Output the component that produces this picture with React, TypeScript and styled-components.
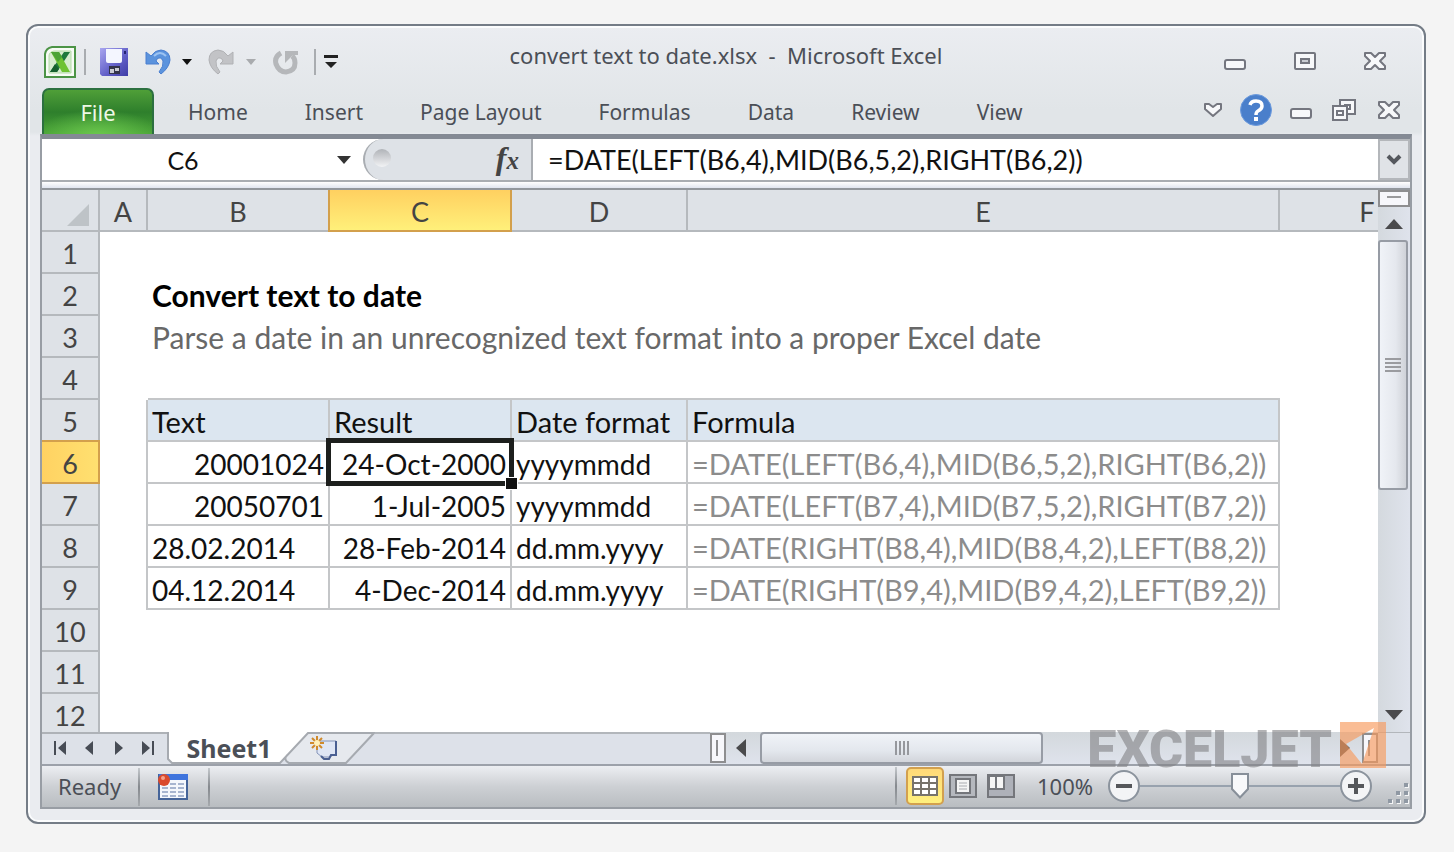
import React from "react";
import styled, { createGlobalStyle, css } from "styled-components";

const ui = `"Noto Sans", "Open Sans", sans-serif`;
const sheet = `Lato, "Noto Sans", sans-serif`;

const GlobalStyle = createGlobalStyle`
  *, *::before, *::after { box-sizing: border-box; }
  body { margin: 0; background: #f4f4f4; font-family: ${ui}; color: #4b4f57; }
  button, input { font: inherit; color: inherit; }
`;

const Page = styled.div`
  display: flex;
  height: 100vh;
  min-height: 480px;
  padding: 24px 28px 28px 26px;
`;

const Window = styled.main`
  position: relative;
  flex: 1;
  min-width: 0;
  display: flex;
  flex-direction: column;
  padding: 0 12px 13px;
  border: 2px solid #747c86;
  border-radius: 12px;
  background: linear-gradient(#ebedf1, #e1e5e8 84px, #e1e5e8 106px, #eaecf0 110px);
  box-shadow: inset 0 0 0 2px #fbfcfd;
`;

const IconButton = styled.button<{ $gap?: number }>`
  display: flex;
  align-items: center;
  justify-content: center;
  flex: none;
  margin: 0 0 0 ${(p) => p.$gap ?? 0}px;
  padding: 0;
  border: 0;
  background: none;
  svg { display: block; }
`;

const TitleBar = styled.header`
  display: grid;
  grid-template-columns: 1fr auto 1fr;
  height: 62px;
`;

const QuickAccess = styled.div`
  display: flex;
  align-items: center;
  padding: 10px 0 0 4px;
`;

const Divider = styled.span<{ $gap?: number }>`
  flex: none;
  width: 2px;
  height: 26px;
  margin-left: ${(p) => p.$gap ?? 0}px;
  background: #a9acb0;
`;

const Title = styled.h1`
  margin: 0;
  font-size: 22px;
  font-weight: 400;
  line-height: 58px;
  white-space: nowrap;
`;

const WindowControls = styled.div`
  display: flex;
  justify-content: flex-end;
  align-items: center;
  gap: 46px;
  padding: 8px 25px 0 0;
`;

const Ribbon = styled.nav`
  display: flex;
  gap: 1px;
  height: 46px;
  padding-left: 2px;
`;

const FileTab = styled.button`
  width: 112px;
  margin-right: 5px;
  padding: 0;
  border: 2px solid #2c7040;
  border-bottom: 0;
  border-radius: 7px 7px 0 0;
  background: radial-gradient(ellipse 60% 60% at 50% 105%, #6cc84e, rgba(76, 170, 60, 0) 100%),
    linear-gradient(#4f9f38, #2e7f2c 50%, #48a236);
  color: #eef8e6;
  font-size: 22px;
`;

const RibbonTab = styled.button`
  padding: 1px 28px 0;
  border: 0;
  background: none;
  font-size: 21px;
  white-space: nowrap;
`;

const RibbonTools = styled.div`
  display: flex;
  align-items: center;
  margin-left: auto;
  padding: 0 11px 2px 0;
`;

const Workbook = styled.section`
  flex: 1;
  min-height: 0;
  display: flex;
  flex-direction: column;
  border: 2px solid #989da4;
  border-top: 5px solid #848a94;
  background: #fff;
`;

const FormulaBar = styled.div`
  display: flex;
  flex: none;
  height: 43px;
  border-bottom: 2px solid #a9adb2;
  font-size: 25px;
  color: #111;
`;

const NameBox = styled.input`
  width: 282px;
  padding: 0;
  border: 0;
  background: #fff;
  font-family: ${sheet};
  text-align: center;
`;

const FunctionArea = styled.div`
  display: flex;
  align-items: center;
  justify-content: space-between;
  width: 170px;
  margin-left: 11px;
  padding: 0 12px 0 8px;
  border: 2px solid #a9adb2;
  border-width: 0 2px 0 2px;
  border-radius: 22px 0 0 22px;
  background: #dee2e7;
`;

const Knob = styled.span`
  width: 18px;
  height: 18px;
  margin-bottom: 4px;
  border-radius: 9px;
  background: linear-gradient(#b0b3b8, #f2f3f5);
`;

const FxButton = styled(IconButton)`
  align-items: baseline;
  font: italic 700 32px/36px "Liberation Serif", serif;
  color: #444;
  small { font-size: 25px; }
`;

const FormulaInput = styled.input`
  flex: 1;
  min-width: 0;
  padding: 0 0 0 15px;
  border: 0;
  background: #fff;
  font-family: ${sheet};
  font-size: 27px;
`;

const ExpandButton = styled(IconButton)`
  width: 32px;
  border: 2px solid #b4b7bb;
  background: #e0e3e7;
`;

const BarGap = styled.div`
  flex: none;
  height: 8px;
  border-bottom: 2px solid #92979d;
  background: linear-gradient(#fff, #e0e5f0);
`;

const SheetArea = styled.div`
  flex: 1;
  min-height: 0;
  display: flex;
`;

const GridView = styled.div`
  flex: 1;
  min-width: 0;
  overflow: hidden;
`;

const Grid = styled.table`
  width: 1414px;
  table-layout: fixed;
  border-collapse: separate;
  border-spacing: 0;
  font: 400 27px/36px ${sheet};
  color: #111;
`;

const Heading = styled.th<{ $on?: boolean; $dir?: "col" | "row" }>`
  position: relative;
  height: 42px;
  padding: 4px 0 0;
  border: 0 solid #b5b9bd;
  border-width: 0 2px 2px 0;
  background: #dee2e7;
  color: #444;
  font-weight: 400;
  ${(p) =>
    p.$on &&
    css`
      border-color: #d3a04c;
      background: ${p.$dir === "row" ? "linear-gradient(90deg, #ffd262, #ffe070)" : "linear-gradient(#ffd060, #fff07a)"};
      box-shadow: ${p.$dir === "row" ? "0 -2px 0 #d3a04c" : "-2px 0 0 #d3a04c"};
    `}
  svg { display: block; margin: 6px 8px 0 auto; }
`;

type CellProps = { $right?: boolean; $bottom?: boolean; $fill?: boolean; $end?: boolean; $muted?: boolean; $size?: number };
const Cell = styled.td<CellProps>`
  position: relative;
  height: 42px;
  padding: 4px 4px 0;
  border: 0 solid #c4c6c8;
  border-right-width: ${(p) => (p.$right ? 2 : 0)}px;
  border-bottom-width: ${(p) => (p.$bottom ? 2 : 0)}px;
  background: ${(p) => (p.$fill ? "#dce6f0" : "transparent")};
  text-align: ${(p) => (p.$end ? "right" : "left")};
  color: ${(p) => (p.$muted ? "#8c8c8c" : "inherit")};
  font-size: ${(p) => p.$size ?? 29}px;
  line-height: 36px;
  white-space: nowrap;
`;

const NoteCell = styled(Cell)<{ $strong?: boolean }>`
  padding: 2px 4px;
  color: ${(p) => (p.$strong ? "#000" : "#686868")};
  font-size: 30px;
  font-weight: ${(p) => (p.$strong ? 700 : 400)};
`;

const Selection = styled.span`
  position: absolute;
  z-index: 2;
  inset: -4px;
  border: 5px solid #1d1f1d;
  &::after {
    content: "";
    position: absolute;
    right: -9px;
    bottom: -9px;
    width: 13px;
    height: 13px;
    border: 1px solid #fff;
    background: #111;
  }
`;

const VScroll = styled.div`
  display: flex;
  flex-direction: column;
  align-items: center;
  flex: none;
  width: 32px;
  background: linear-gradient(90deg, #d4d9de, #dfe3ec);
`;

const VSplit = styled.div`
  width: 32px;
  height: 17px;
  border: 2px solid #8e8e90;
  background: linear-gradient(#9a9a9c, #9a9a9c) 50% 4px / 14px 2px no-repeat, #f7f7fb;
`;

const VThumb = styled.div`
  display: flex;
  align-items: center;
  justify-content: center;
  width: 30px;
  height: 250px;
  margin-right: 2px;
  border: 2px solid #979ca5;
  border-radius: 3px;
  background: linear-gradient(90deg, #f0f3f8, #e5e8ee 60%, #cfd2d8);
`;

const ScrollArrow = styled(IconButton)<{ $h: number }>`
  width: 30px;
  height: ${(p) => p.$h}px;
  &:last-child { margin-top: auto; }
`;

const TabStrip = styled.div`
  display: flex;
  flex: none;
  height: 34px;
  border-bottom: 2px solid #9ca1aa;
  background: linear-gradient(#d3d8dc, #dfe3ec);
`;

const TabNav = styled.div`
  display: flex;
  align-items: center;
  justify-content: space-between;
  width: 125px;
  padding: 0 12px 2px 11px;
  border-top: 2px solid #aeb2b7;
  background: #dde1e8;
`;

const SheetTabs = styled.div`
  position: relative;
  display: flex;
  width: 208px;
`;

const TabShapes = styled.svg`
  position: absolute;
  inset: 0;
`;

const SheetTab = styled.button`
  position: relative;
  width: 124px;
  padding: 0;
  border: 0;
  background: none;
  font-size: 25px;
  line-height: 30px;
  font-weight: 700;
`;

const NewTab = styled(IconButton)`
  position: relative;
  width: 66px;
`;

const TabFill = styled.div`
  flex: 1;
  border-top: 2px solid #b2b6bb;
  background: #dde1e9;
`;

const HScroll = styled.div`
  display: flex;
  align-items: center;
  flex: none;
  width: 668px;
`;

const HSplit = styled.span`
  width: 16px;
  height: 30px;
  border: 2px solid #8e8e90;
  background: linear-gradient(#8e8e90, #8e8e90) 4px 50% / 2px 16px no-repeat, #f7f7fb;
  &:last-child { margin-left: auto; }
`;

const HThumb = styled.div`
  display: flex;
  align-items: center;
  justify-content: center;
  width: 283px;
  height: 32px;
  margin-left: 13px;
  border: 2px solid #979ca5;
  border-radius: 4px;
  background: linear-gradient(#f0f3f8, #e3e7ed 60%, #d2d5db);
`;

const Corner = styled.div`
  flex: none;
  width: 32px;
  border-top: 1px solid #b2b6bb;
  background: #dde1e9;
`;

const StatusBar = styled.footer`
  display: flex;
  align-items: center;
  flex: none;
  height: 41px;
  background: linear-gradient(#eceef2, #cdd0d4 50%, #b9bdc1);
`;

const Ready = styled.span`
  width: 96px;
  padding: 0 0 2px 16px;
  font-size: 22px;
`;

const StatusDivider = styled(Divider)`
  height: 38px;
  background: linear-gradient(#c4c8cc, #85898e 50%, #a5a9ad);
`;

const StatusTools = styled.div`
  display: flex;
  align-items: center;
  align-self: stretch;
  margin-left: auto;
  padding-bottom: 2px;
`;

const ViewButton = styled(IconButton)<{ $on?: boolean }>`
  width: 38px;
  height: 38px;
  ${(p) =>
    p.$on &&
    css`
      border: 2px solid #d2a04f;
      border-radius: 5px;
      background: linear-gradient(#ffd978, #fff07e);
    `}
`;

const ZoomLabel = styled.label`
  width: 71px;
  margin-left: 17px;
  font-size: 22px;
`;

const thumb = encodeURIComponent(
  `<svg xmlns="http://www.w3.org/2000/svg" width="18" height="26"><path d="M1 1H17V16L9 24.500L1 16Z" fill="#f8f9fb" stroke="#878f99" stroke-width="2"/></svg>`
);

const ZoomSlider = styled.input`
  appearance: none;
  width: 200px;
  height: 26px;
  margin: 0;
  background: linear-gradient(#98a2ae, #98a2ae) 0 50% / 100% 2px no-repeat;
  &::-webkit-slider-thumb {
    appearance: none;
    width: 18px;
    height: 26px;
    border: 0;
    background: url("data:image/svg+xml,${thumb}") no-repeat;
  }
`;

const Grip = styled.svg`
  align-self: flex-end;
  margin-left: 16px;
`;

const Watermark = styled.div`
  position: absolute;
  right: 38px;
  bottom: 46px;
  display: flex;
  align-items: flex-end;
  gap: 8px;
  pointer-events: none;
  color: rgba(128, 129, 131, 0.6);
  font: 900 52px/52px Roboto, sans-serif;
  svg { display: block; margin-bottom: 8px; }
`;

const ExcelIcon = () => (
  <svg width="32" height="32" viewBox="0 0 32 32">
    <path d="M8 1H31V31H1V8Q2 2 8 1Z" fill="#f7fbf5" stroke="#4c9446" strokeWidth="2" />
    <path d="M10 5H27V27H5V10Q5 6 10 5Z" fill="#d6ecd0" stroke="#b4dca8" strokeWidth="1" />
    <path d="M20 6H26L13 26H6Z" fill="#1f7a3e" />
    <path d="M7 6H15L26 26H18Z" fill="#6fc233" />
    <path d="M7 6H15L18 11L14 16Z" fill="#4aa336" />
    <path d="M6 26L11 18L15 23L13 26Z" fill="#16602f" />
  </svg>
);

const SaveIcon = () => (
  <svg width="28" height="28" viewBox="0 0 28 28">
    <defs>
      <linearGradient id="disk" x1="0" y1="0" x2="1" y2="1">
        <stop offset="0" stopColor="#a9a6f0" />
        <stop offset=".6" stopColor="#5f5dc6" />
        <stop offset="1" stopColor="#3e3da6" />
      </linearGradient>
    </defs>
    <path d="M0 0H28V28H2L0 26Z" fill="url(#disk)" />
    <path d="M6 1H22V13Q22 15 20 15H8Q6 15 6 13Z" fill="#f4f6ff" />
    <path d="M24 3H26V6H24Z" fill="#232273" />
    <path d="M9 18H20V26H9Z" fill="#33344a" />
    <path d="M10 21H14V25H10ZM15 20H19V23H15Z" fill="#c9cbd4" />
  </svg>
);

const UndoIcon = () => (
  <svg width="26" height="28" viewBox="0 0 26 28">
    <path d="M1 4L6 8Q10 2 16 2Q25 3 25 12Q24 20 16 26L14 24Q19 18 18 13Q16 8 12 11L11 13L14 16H1Z" fill="#5b93dd" stroke="#4a7fd0" strokeWidth="1" />
    <path d="M9 8Q15 2 21 8" fill="none" stroke="#9cc3f2" strokeWidth="2" />
  </svg>
);

const RedoIcon = () => (
  <svg width="26" height="28" viewBox="0 0 26 28">
    <path d="M25 4L20 8Q16 2 10 2Q1 3 1 12Q2 20 10 26L12 24Q7 18 8 13Q10 8 14 11L15 13L12 16H25Z" fill="#c2c3c6" stroke="#b0b1b4" strokeWidth="1" />
  </svg>
);

const RepeatIcon = () => (
  <svg width="26" height="28" viewBox="0 0 26 28">
    <path d="M8 5Q1 9 3 16Q6 24 13 24Q22 23 22 15Q22 10 19 8" fill="none" stroke="#b5b7ba" strokeWidth="5" />
    <path d="M12 15V3H25V7H20Z" fill="#b5b7ba" />
  </svg>
);

const Caret = ({ color }: { color: string }) => (
  <svg width="12" height="8" viewBox="0 0 12 8"><path d="M1 1H11L6 7Z" fill={color} /></svg>
);

const line = { fill: "#f7f8fa", stroke: "#74767f", strokeWidth: 2 };

const MinIcon = () => (
  <svg width="24" height="20" viewBox="0 0 24 20"><rect x="2" y="9" width="20" height="9" rx="2" {...line} /></svg>
);
const MaxIcon = () => (
  <svg width="24" height="20" viewBox="0 0 24 20">
    <rect x="2" y="2" width="20" height="16" rx="1" {...line} />
    <rect x="8" y="8" width="8" height="4" fill="#c9ccd2" stroke="#74767f" strokeWidth="2" />
  </svg>
);
const CloseIcon = () => (
  <svg width="24" height="20" viewBox="0 0 24 20">
    <path d="M2 2H8L12 6L16 2H22V5L17 10L22 15V18H16L12 14L8 18H2V15L7 10L2 5Z" {...line} strokeLinejoin="round" />
  </svg>
);
const RestoreIcon = () => (
  <svg width="26" height="24" viewBox="0 0 26 24">
    <path d="M9 2H24V16H9Z" {...line} />
    <path d="M14 7H19V11H14Z" {...line} />
    <path d="M2 8H16V22H2Z" {...line} />
    <path d="M6 13H12V17H6Z" {...line} />
  </svg>
);
const CollapseIcon = () => (
  <svg width="20" height="16" viewBox="0 0 20 16">
    <path d="M2 2H6L10 5L14 2H18V7L10 14L2 7Z" {...line} strokeLinejoin="round" />
  </svg>
);
const HelpIcon = () => (
  <svg width="32" height="32" viewBox="0 0 32 32">
    <circle cx="16" cy="16" r="15.500" fill="#4a7fcb" stroke="#6d9bdd" />
    <path d="M10 11Q11 7 16 7Q22 7 22 12Q22 15 18 17Q16 18 16 21" fill="none" stroke="#fff" strokeWidth="3.500" />
    <rect x="14" y="23" width="4" height="4" fill="#fff" />
  </svg>
);

const NavIcon = ({ d }: { d: string }) => (
  <svg width="14" height="16" viewBox="0 0 14 16"><path d={d} fill="#474c55" /></svg>
);

const MacroIcon = () => (
  <svg width="32" height="28" viewBox="0 0 32 28">
    <rect x="2" y="2" width="28" height="24" fill="#f4f7fc" stroke="#456499" strokeWidth="2" />
    <rect x="2" y="1" width="29" height="6" fill="#3f74dd" />
    <g fill="#a7b5d0">
      {[10, 14, 18, 22].map((y) => [5, 13, 21].map((x) => <rect key={`${x}-${y}`} x={x} y={y} width="6" height="2" />))}
    </g>
    <circle cx="7" cy="7" r="6" fill="#da4a2d" />
    <circle cx="6" cy="5" r="2" fill="#f3a18d" />
  </svg>
);

const NormalIcon = () => (
  <svg width="26" height="20" viewBox="0 0 26 20">
    <rect width="26" height="20" fill="#77736b" />
    {[2, 8, 14].map((y) => [2, 10, 18].map((x) => <rect key={`${x}-${y}`} x={x} y={y} width="6" height="4" fill="#fff" />))}
  </svg>
);
const PageIcon = () => (
  <svg width="28" height="24" viewBox="0 0 28 24">
    <rect x="1" y="1" width="26" height="22" fill="#b5b8be" stroke="#74767b" strokeWidth="2" />
    <rect x="7" y="5" width="14" height="14" fill="#f5f5f5" stroke="#74767b" strokeWidth="2" />
    <path d="M10 9H18M10 12H18M10 15H18" stroke="#a9abb0" strokeWidth="1" />
  </svg>
);
const BreakIcon = () => (
  <svg width="28" height="24" viewBox="0 0 28 24">
    <rect x="1" y="1" width="26" height="22" fill="#aeb1b9" stroke="#74767b" strokeWidth="2" />
    <path d="M2 2H17V15H2Z" fill="#f5f5f5" stroke="#74767b" strokeWidth="2" />
    <path d="M9 2V15" stroke="#74767b" strokeWidth="2" />
  </svg>
);
const ZoomIcon = ({ d }: { d: string }) => (
  <svg width="32" height="32" viewBox="0 0 32 32">
    <circle cx="16" cy="16" r="15" fill="#f3f4f6" stroke="#8b939d" strokeWidth="2" />
    <path d={d} stroke="#55575b" strokeWidth="4" />
  </svg>
);

const columns = [
  { name: "A", width: 48 },
  { name: "B", width: 182 },
  { name: "C", width: 182 },
  { name: "D", width: 176 },
  { name: "E", width: 592 },
  { name: "F", width: 176 },
];

const data: Record<number, string[]> = {
  5: ["Text", "Result", "Date format", "Formula"],
  6: ["20001024", "24-Oct-2000", "yyyymmdd", "=DATE(LEFT(B6,4),MID(B6,5,2),RIGHT(B6,2))"],
  7: ["20050701", "1-Jul-2005", "yyyymmdd", "=DATE(LEFT(B7,4),MID(B7,5,2),RIGHT(B7,2))"],
  8: ["28.02.2014", "28-Feb-2014", "dd.mm.yyyy", "=DATE(RIGHT(B8,4),MID(B8,4,2),LEFT(B8,2))"],
  9: ["04.12.2014", "4-Dec-2014", "dd.mm.yyyy", "=DATE(RIGHT(B9,4),MID(B9,4,2),LEFT(B9,2))"],
};

const SheetRow = ({ n }: { n: number }) => {
  const values = data[n];
  return (
    <tr>
      <Heading scope="row" $dir="row" $on={n === 6}>{n}</Heading>
      <Cell $right={!!values} />
      {n === 2 && <NoteCell $strong colSpan={4}>Convert text to date</NoteCell>}
      {n === 3 && <NoteCell colSpan={4}>Parse a date in an unrecognized text format into a proper Excel date</NoteCell>}
      {values?.map((text, i) => (
        <Cell
          key={i}
          $right
          $bottom
          $fill={n === 5}
          $size={n > 5 && i < 3 ? 28 : 29}
          $end={n > 5 && (i === 1 || (i === 0 && n < 8))}
          $muted={n > 5 && i === 3}
        >
          {text}
          {n === 6 && i === 1 && <Selection />}
        </Cell>
      ))}
      {!values && n !== 2 && n !== 3 && [1, 2, 3, 4].map((i) => <Cell key={i} $bottom={n === 4} />)}
      <Cell />
    </tr>
  );
};

export default function App() {
  return (
    <Page>
      <GlobalStyle />
      <Window>
        <TitleBar>
          <QuickAccess>
            <IconButton aria-label="Excel"><ExcelIcon /></IconButton>
            <Divider $gap={8} />
            <IconButton $gap={14} aria-label="Save"><SaveIcon /></IconButton>
            <IconButton $gap={17} aria-label="Undo"><UndoIcon /></IconButton>
            <IconButton $gap={10} aria-label="Undo history"><Caret color="#111" /></IconButton>
            <IconButton $gap={15} aria-label="Redo"><RedoIcon /></IconButton>
            <IconButton $gap={11} aria-label="Redo history"><Caret color="#a9abae" /></IconButton>
            <IconButton $gap={16} aria-label="Repeat"><RepeatIcon /></IconButton>
            <Divider $gap={15} />
            <IconButton $gap={8} aria-label="Customize toolbar">
              <svg width="14" height="14" viewBox="0 0 14 14"><path d="M0 0H14V3H0ZM1 7H13L7 13Z" fill="#222" /></svg>
            </IconButton>
          </QuickAccess>
          <Title>convert text to date.xlsx&nbsp; -&nbsp; Microsoft Excel</Title>
          <WindowControls>
            <IconButton aria-label="Minimize"><MinIcon /></IconButton>
            <IconButton aria-label="Maximize"><MaxIcon /></IconButton>
            <IconButton aria-label="Close"><CloseIcon /></IconButton>
          </WindowControls>
        </TitleBar>

        <Ribbon>
          <FileTab>File</FileTab>
          {["Home", "Insert", "Page Layout", "Formulas", "Data", "Review", "View"].map((t) => (
            <RibbonTab key={t}>{t}</RibbonTab>
          ))}
          <RibbonTools>
            <IconButton aria-label="Collapse ribbon"><CollapseIcon /></IconButton>
            <IconButton $gap={17} aria-label="Help"><HelpIcon /></IconButton>
            <IconButton $gap={17} aria-label="Minimize workbook"><MinIcon /></IconButton>
            <IconButton $gap={18} aria-label="Restore workbook"><RestoreIcon /></IconButton>
            <IconButton $gap={20} aria-label="Close workbook"><CloseIcon /></IconButton>
          </RibbonTools>
        </Ribbon>

        <Workbook>
          <FormulaBar>
            <NameBox aria-label="Name box" defaultValue="C6" />
            <IconButton $gap={12} aria-label="Names">
              <svg width="16" height="10" viewBox="0 0 16 10"><path d="M1 1H15L8 9Z" fill="#333" /></svg>
            </IconButton>
            <FunctionArea>
              <Knob />
              <FxButton aria-label="Insert function">f<small>x</small></FxButton>
            </FunctionArea>
            <FormulaInput aria-label="Formula" defaultValue="=DATE(LEFT(B6,4),MID(B6,5,2),RIGHT(B6,2))" />
            <ExpandButton aria-label="Expand formula bar">
              <svg width="16" height="12" viewBox="0 0 16 12"><path d="M2 2L8 8L14 2" fill="none" stroke="#55585e" strokeWidth="4" /></svg>
            </ExpandButton>
          </FormulaBar>
          <BarGap />

          <SheetArea>
            <GridView>
              <Grid>
                <colgroup>
                  <col style={{ width: 58 }} />
                  {columns.map((c) => <col key={c.name} style={{ width: c.width }} />)}
                </colgroup>
                <thead>
                  <tr>
                    <Heading aria-label="Select all">
                      <svg width="24" height="24" viewBox="0 0 24 24"><path d="M23 1V23H1Z" fill="#bec3c7" /></svg>
                    </Heading>
                    {columns.map((c) => (
                      <Heading key={c.name} scope="col" $dir="col" $on={c.name === "C"}>{c.name}</Heading>
                    ))}
                  </tr>
                </thead>
                <tbody>
                  {Array.from({ length: 12 }, (_, i) => <SheetRow key={i} n={i + 1} />)}
                </tbody>
              </Grid>
            </GridView>
            <VScroll>
              <VSplit />
              <ScrollArrow $h={33} aria-label="Scroll up">
                <svg width="20" height="12" viewBox="0 0 20 12"><path d="M10 1L19 11H1Z" fill="#4a4a4c" /></svg>
              </ScrollArrow>
              <VThumb>
                <svg width="16" height="16" viewBox="0 0 16 16"><path d="M0 2H16M0 6H16M0 10H16M0 14H16" stroke="#9a9b9f" strokeWidth="2" /></svg>
              </VThumb>
              <ScrollArrow $h={34} aria-label="Scroll down">
                <svg width="20" height="12" viewBox="0 0 20 12"><path d="M1 1H19L10 11Z" fill="#4a4a4c" /></svg>
              </ScrollArrow>
            </VScroll>
          </SheetArea>

          <TabStrip>
            <TabNav>
              <IconButton aria-label="First sheet"><NavIcon d="M1 1H3V15H1ZM13 1V15L5 8Z" /></IconButton>
              <IconButton aria-label="Previous sheet"><NavIcon d="M11 1V15L3 8Z" /></IconButton>
              <IconButton aria-label="Next sheet"><NavIcon d="M3 1V15L11 8Z" /></IconButton>
              <IconButton aria-label="Last sheet"><NavIcon d="M1 1V15L9 8ZM11 1H13V15H11Z" /></IconButton>
            </TabNav>
            <SheetTabs>
              <TabShapes width="208" height="32" viewBox="0 0 208 32">
                <path d="M0 0H208V32H0Z" fill="#dde1e9" />
                <path d="M0 0H141L113 31H4L0 27Z" fill="#fff" />
                <path d="M141 1H207L179 31H122Q117 28 120 23Z" fill="#e6e9ee" />
                <path d="M1 0V27L5 31H113L141 1H207L179 31H122Q116 28 120 23" fill="none" stroke="#a6aab0" strokeWidth="2" />
              </TabShapes>
              <SheetTab>Sheet1</SheetTab>
              <NewTab aria-label="Insert sheet">
                <svg width="30" height="26" viewBox="0 0 30 26">
                  <path d="M8 6H27V20H22V22H13L8 18Z" fill="#dfe6f5" stroke="#8493b8" strokeWidth="1" />
                  <path d="M27 6V20H22L20 24H15L12 21" fill="none" stroke="#4a5f92" strokeWidth="2" />
                  <path d="M8 1V15M1 8H15M3 3L13 13M13 3L3 13" stroke="#cf8a2c" strokeWidth="2" />
                  <circle cx="8" cy="8" r="3" fill="#fff0b8" />
                </svg>
              </NewTab>
            </SheetTabs>
            <TabFill />
            <HScroll>
              <HSplit />
              <IconButton $gap={9} aria-label="Scroll left">
                <svg width="12" height="20" viewBox="0 0 12 20"><path d="M11 1V19L1 10Z" fill="#4a4a4c" /></svg>
              </IconButton>
              <HThumb>
                <svg width="16" height="14" viewBox="0 0 16 14"><path d="M2 0V14M6 0V14M10 0V14M14 0V14" stroke="#96989d" strokeWidth="2" /></svg>
              </HThumb>
              <IconButton $gap={296} aria-label="Scroll right">
                <svg width="12" height="20" viewBox="0 0 12 20"><path d="M1 1V19L11 10Z" fill="#4a4a4c" /></svg>
              </IconButton>
              <HSplit />
            </HScroll>
            <Corner />
          </TabStrip>

          <StatusBar>
            <Ready>Ready</Ready>
            <StatusDivider />
            <IconButton $gap={17} aria-label="Record macro"><MacroIcon /></IconButton>
            <StatusDivider $gap={19} />
            <StatusTools>
              <StatusDivider />
              <ViewButton $on $gap={9} aria-label="Normal"><NormalIcon /></ViewButton>
              <ViewButton aria-label="Page layout"><PageIcon /></ViewButton>
              <ViewButton aria-label="Page break preview"><BreakIcon /></ViewButton>
              <ZoomLabel htmlFor="zoom">100%</ZoomLabel>
              <IconButton aria-label="Zoom out"><ZoomIcon d="M8 16H24" /></IconButton>
              <ZoomSlider id="zoom" type="range" min={0} max={200} defaultValue={100} />
              <IconButton aria-label="Zoom in"><ZoomIcon d="M8 16H24M16 8V24" /></IconButton>
              <Grip width="22" height="24" viewBox="0 0 22 24">
                {[[16, 2], [8, 10], [16, 10], [0, 18], [8, 18], [16, 18]].map(([x, y]) => (
                  <g key={`${x}-${y}`}>
                    <rect x={x + 1} y={y + 1} width="4" height="4" fill="#f4f5f6" />
                    <rect x={x} y={y} width="4" height="4" fill="#8f98a3" />
                  </g>
                ))}
              </Grip>
            </StatusTools>
          </StatusBar>
        </Workbook>

        <Watermark>
          <span>EXCELJET</span>
          <svg width="46" height="46" viewBox="0 0 46 46">
            <path fillRule="evenodd" d="M0 0H46V46H0ZM34 6L6 22L22 42Z" fill="#f79a5c" fillOpacity=".65" />
          </svg>
        </Watermark>
      </Window>
    </Page>
  );
}
